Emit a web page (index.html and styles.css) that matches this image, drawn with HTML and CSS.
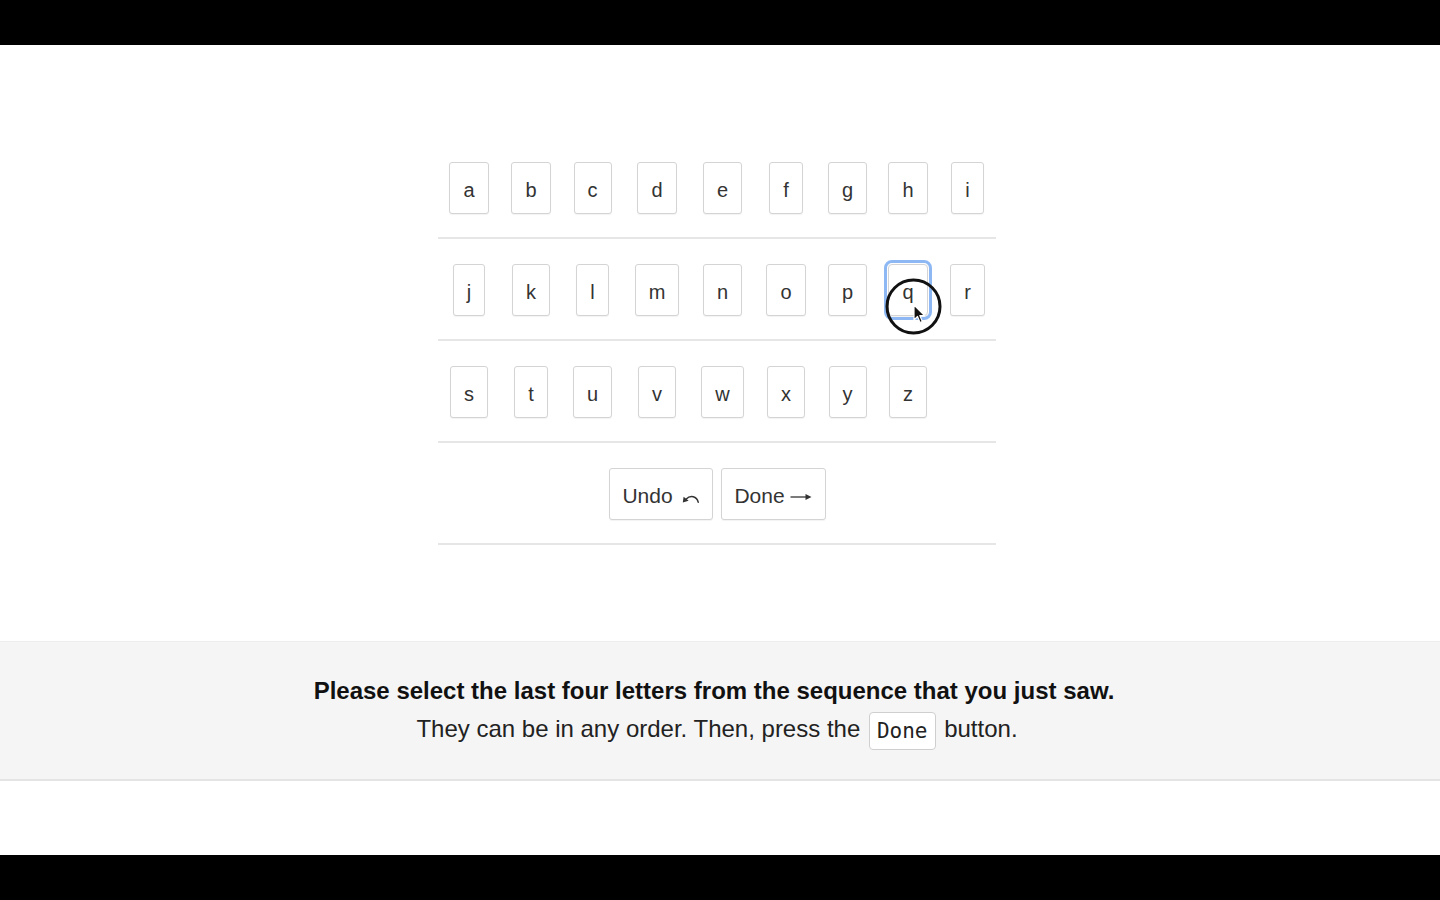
FILE: index.html
```html
<!DOCTYPE html>
<html lang="en">
<head>
<meta charset="utf-8">
<title>Select letters</title>
<link rel="stylesheet" href="styles.css">
</head>
<body>
<div class="screen">
  <div class="board">
    <div class="row">
      <button class="key">a</button>
      <button class="key">b</button>
      <button class="key">c</button>
      <button class="key">d</button>
      <button class="key">e</button>
      <button class="key">f</button>
      <button class="key">g</button>
      <button class="key">h</button>
      <button class="key">i</button>
    </div>
    <div class="row">
      <button class="key">j</button>
      <button class="key">k</button>
      <button class="key">l</button>
      <button class="key">m</button>
      <button class="key">n</button>
      <button class="key">o</button>
      <button class="key">p</button>
      <button class="key key-focus">q<span class="cursor"><svg class="ring" width="57" height="57" viewBox="0 0 57 57"><circle cx="28.5" cy="28.5" r="26.5" fill="none" stroke="#111" stroke-width="3"/></svg><svg class="arrow" width="13" height="20" viewBox="0 0 13 20"><path d="M1 1 L1 16 L4.5 12.5 L7 18.5 L9.3 17.5 L6.8 11.6 L11.5 11.6 Z" fill="#111" stroke="#fff" stroke-width="1.2" stroke-linejoin="round"/></svg></span></button>
      <button class="key">r</button>
    </div>
    <div class="row">
      <button class="key">s</button>
      <button class="key">t</button>
      <button class="key">u</button>
      <button class="key">v</button>
      <button class="key">w</button>
      <button class="key">x</button>
      <button class="key">y</button>
      <button class="key">z</button>
    </div>
    <div class="actions">
      <button class="action action-undo"><span>Undo</span><svg class="icon-undo" width="17" height="10" viewBox="0 0 17 10"><path d="M16.2 9.2 C14.8 3.2 8.5 1.6 4 6.2" fill="none" stroke="#333" stroke-width="1.5" stroke-linecap="round"/><path d="M0.8 9.6 L1.6 3.8 L6.6 7.8 Z" fill="#333"/></svg></button>
      <button class="action action-done"><span>Done</span><svg class="icon-next" width="22" height="10" viewBox="0 0 22 10"><path d="M0.5 5 L17 5" stroke="#333" stroke-width="1.3"/><path d="M15.5 2 L21.5 5 L15.5 8 Z" fill="#333"/></svg></button>
    </div>
  </div>

  <div class="instructions">
    <p class="lead">Please select the last four letters from the sequence that you just saw.</p>
    <p class="sub">They can be in any order. Then, press the <kbd>Done</kbd> button.</p>
  </div>
</div>
</body>
</html>
```

FILE: styles.css
```css
html, body {
  margin: 0;
  padding: 0;
  background: #000;
}

.screen {
  margin-top: 45px;
  height: 810px;
  background: #fff;
  font-family: "Liberation Sans", Arial, Helvetica, sans-serif;
  color: #333;
  overflow: hidden;
}

.board {
  width: 558px;
  margin: 92px 0 0 calc(50% - 282px);
}

.row {
  display: grid;
  grid-template-columns: 62px 62px 61px 68px 63px 64px 59px 62px 57px;
  padding: 25px 0 23px;
  border-bottom: 2px solid #e6e6e6;
}

.key {
  justify-self: center;
  height: 52px;
  padding: 3px 13px 0;
  margin: 0;
  border: 1px solid #d4d4d4;
  border-radius: 3px;
  background: #fff;
  box-shadow: 0 1px 1px rgba(0, 0, 0, 0.05);
  font-family: "Liberation Sans", Arial, sans-serif;
  font-size: 20px;
  color: #333;
  line-height: 1;
  cursor: default;
}

.key-focus {
  position: relative;
  outline: 3px solid #8db8f3;
  outline-offset: 1px;
  border-radius: 4px;
}

.cursor {
  position: absolute;
  left: -4px;
  top: 13px;
  width: 57px;
  height: 57px;
}

.ring {
  position: absolute;
  left: 0;
  top: 0;
}

.arrow {
  position: absolute;
  left: 28px;
  top: 26px;
}

.actions {
  display: flex;
  justify-content: center;
  gap: 8px;
  padding: 25px 0 23px;
  border-bottom: 2px solid #e6e6e6;
}

.action {
  display: inline-flex;
  align-items: center;
  justify-content: center;
  height: 52px;
  padding: 2px 0 0;
  margin: 0;
  border: 1px solid #d4d4d4;
  border-radius: 3px;
  background: #fff;
  box-shadow: 0 1px 1px rgba(0, 0, 0, 0.05);
  font-family: "Liberation Sans", Arial, sans-serif;
  font-size: 21px;
  color: #333;
  line-height: 1;
}

.action-undo {
  width: 104px;
  gap: 9px;
}

.action-done {
  width: 105px;
  gap: 5px;
}

.icon-undo {
  margin-top: 5px;
}

.icon-next {
  margin-top: 3px;
}

.instructions {
  margin-top: 96px;
  padding: 30px 6px 29px 0;
  background: #f5f5f5;
  border-top: 1px solid #ededed;
  border-bottom: 2px solid #e4e4e4;
  text-align: center;
  color: #1a1a1a;
  font-size: 24px;
  line-height: 38px;
}

.instructions p {
  margin: 0;
}

.lead {
  font-weight: bold;
  color: #111;
  padding-right: 6px;
}

.sub {
  color: #222;
}

kbd {
  display: inline-block;
  font-family: "DejaVu Sans Mono", "Liberation Mono", monospace;
  font-size: 21px;
  line-height: 23px;
  padding: 7px 7px 6px;
  margin: 0 2px;
  background: #fff;
  border: 1px solid #cfcfcf;
  border-radius: 4px;
  color: #222;
  vertical-align: middle;
}
```
